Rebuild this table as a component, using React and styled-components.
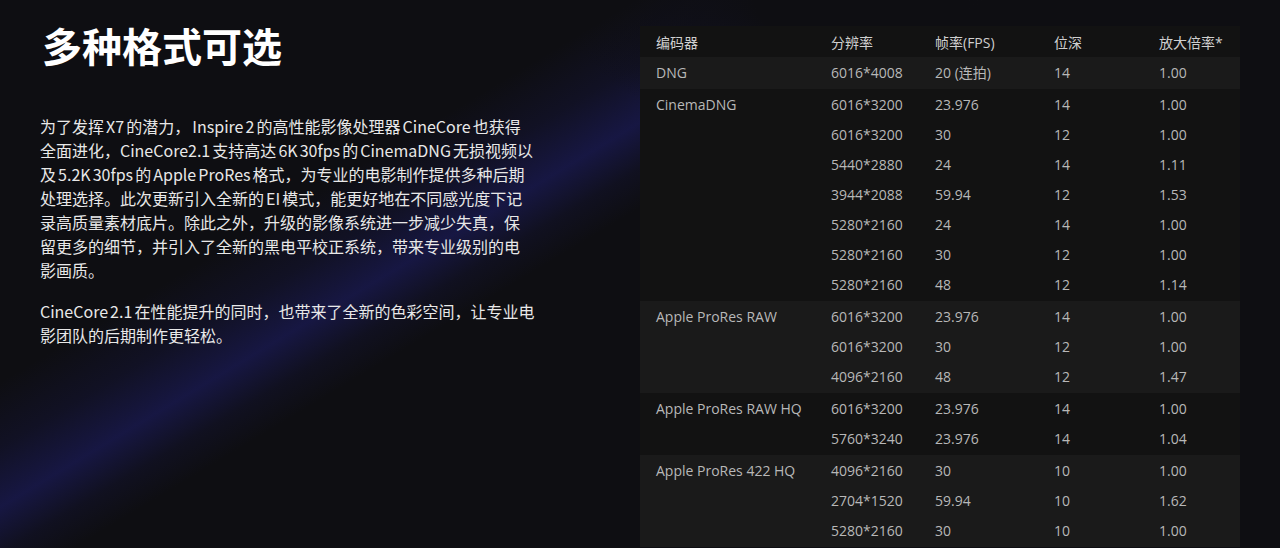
import React from "react";
import styled, { createGlobalStyle } from "styled-components";

const GlobalStyle = createGlobalStyle`
    html, body {
        margin: 0;
        padding: 0;
        background: #0e0e12;
        overflow: hidden;
    }
    * {
        box-sizing: border-box;
    }
`;

const FONT = `"Open Sans", "Noto Sans CJK SC", sans-serif`;
const CJK = `"Noto Sans CJK SC", "Open Sans", sans-serif`;

const Page = styled.div`
    width: 1280px;
    height: 548px;
    overflow: hidden;
    display: flex;
    font-family: ${FONT};
    background:
        radial-gradient(
            ellipse 300px 150px at 860px 0,
            rgba(14, 14, 18, 1) 35%,
            rgba(14, 14, 18, 0) 100%
        ),
        linear-gradient(
            149deg,
            rgba(30, 30, 110, 0) 29%,
            rgba(32, 32, 120, 0.18) 34%,
            rgba(36, 36, 140, 0.4) 38.5%,
            rgba(32, 32, 120, 0.14) 42%,
            rgba(30, 30, 110, 0) 45%
        ),
        #0e0e12;
`;

const Intro = styled.section`
    width: 640px;
    padding: 21px 0 0 40px;
    color: #ededed;
`;

const Title = styled.h1`
    margin: 0 0 45px 2px;
    font-family: ${CJK};
    font-size: 40px;
    line-height: 48px;
    font-weight: 700;
    color: #fff;
`;

const Para = styled.p`
    width: 494.5px;
    margin: 0 0 17px;
    font-family: ${CJK};
    font-size: 16px;
    line-height: 24px;
    word-spacing: -1.5px;
    color: #e8e8e8;
`;

const TableWrap = styled.section`
    width: 600px;
    margin-top: 26px;
    background: #121212;
    align-self: flex-start;
`;

const cols = "175px 104px 119px 105px 1fr";

const HeadRow = styled.div`
    display: grid;
    grid-template-columns: ${cols};
    height: 31px;
    align-items: center;
    padding-left: 16px;
    font-size: 14px;
    color: #cfcfcf;
`;

const Group = styled.div`
    display: grid;
    grid-template-columns: ${cols};
    padding: 1px 0 1px 16px;
    background: ${(p) => (p.$light ? "#1a1a1a" : "#121212")};
`;

const Codec = styled.div`
    grid-column: 1;
    grid-row: 1 / span ${(p) => p.$span};
    height: 30px;
    line-height: 30px;
    font-size: 14px;
    color: #b8b8b8;
`;

const Cell = styled.div`
    height: 30px;
    line-height: 30px;
    font-size: 14px;
    color: #b8b8b8;
    grid-column: ${(p) => p.$col};
`;

const data = [
    { codec: "DNG", rows: [["6016*4008", "20 (连拍)", "14", "1.00"]] },
    {
        codec: "CinemaDNG",
        rows: [
            ["6016*3200", "23.976", "14", "1.00"],
            ["6016*3200", "30", "12", "1.00"],
            ["5440*2880", "24", "14", "1.11"],
            ["3944*2088", "59.94", "12", "1.53"],
            ["5280*2160", "24", "14", "1.00"],
            ["5280*2160", "30", "12", "1.00"],
            ["5280*2160", "48", "12", "1.14"],
        ],
    },
    {
        codec: "Apple ProRes RAW",
        rows: [
            ["6016*3200", "23.976", "14", "1.00"],
            ["6016*3200", "30", "12", "1.00"],
            ["4096*2160", "48", "12", "1.47"],
        ],
    },
    {
        codec: "Apple ProRes RAW HQ",
        rows: [
            ["6016*3200", "23.976", "14", "1.00"],
            ["5760*3240", "23.976", "14", "1.04"],
        ],
    },
    {
        codec: "Apple ProRes 422 HQ",
        rows: [
            ["4096*2160", "30", "10", "1.00"],
            ["2704*1520", "59.94", "10", "1.62"],
            ["5280*2160", "30", "10", "1.00"],
        ],
    },
];

export default function App() {
    return (
        <React.Fragment>
            <GlobalStyle />
            <Page>
                <Intro>
                    <Title>多种格式可选</Title>
                    <Para>
                        为了发挥 X7 的潜力， Inspire 2 的高性能影像处理器 CineCore 也获得全面进化，CineCore2.1 支持高达 6K 30fps 的 CinemaDNG 无损视频以及 5.2K 30fps 的 Apple ProRes 格式，为专业的电影制作提供多种后期处理选择。此次更新引入全新的 EI 模式，能更好地在不同感光度下记录高质量素材底片。除此之外，升级的影像系统进一步减少失真，保留更多的细节，并引入了全新的黑电平校正系统，带来专业级别的电影画质。
                    </Para>
                    <Para>
                        CineCore 2.1 在性能提升的同时，也带来了全新的色彩空间，让专业电影团队的后期制作更轻松。
                    </Para>
                </Intro>

                <TableWrap>
                    <HeadRow>
                        <div>编码器</div>
                        <div>分辨率</div>
                        <div>帧率(FPS)</div>
                        <div>位深</div>
                        <div>放大倍率*</div>
                    </HeadRow>
                    {data.map((g, i) => (
                        <Group key={g.codec} $light={i % 2 === 0}>
                            <Codec $span={g.rows.length}>{g.codec}</Codec>
                            {g.rows.map((r, j) =>
                                r.map((v, k) => (
                                    <Cell key={j + "-" + k} $col={k + 2}>
                                        {v}
                                    </Cell>
                                ))
                            )}
                        </Group>
                    ))}
                </TableWrap>
            </Page>
        </React.Fragment>
    );
}
